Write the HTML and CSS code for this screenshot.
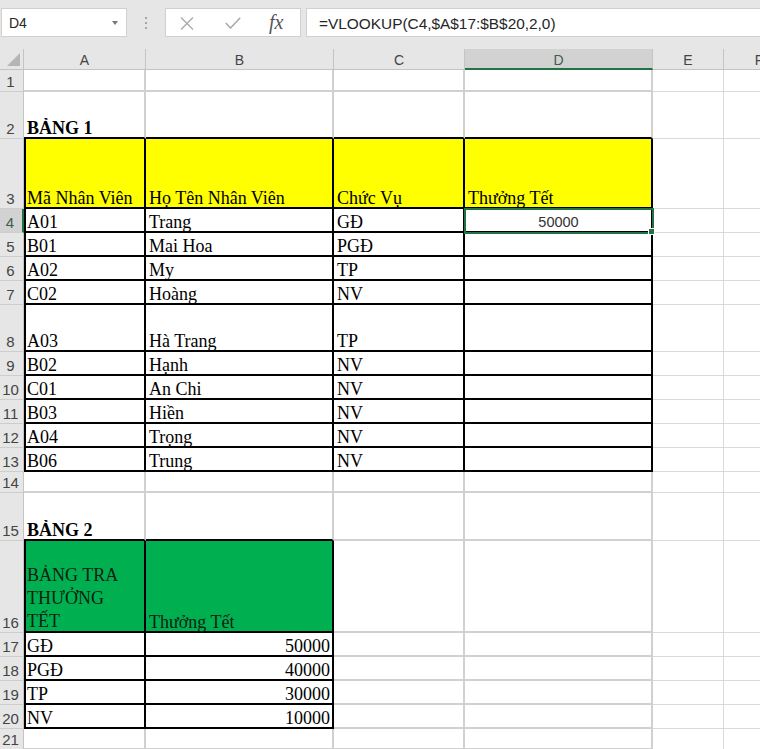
FILE: index.html
```html
<!DOCTYPE html>
<html lang="vi">
<head>
<meta charset="utf-8">
<title>Excel VLOOKUP</title>
<link rel="stylesheet" href="styles.css">
</head>
<body>
<div class="app">
  <div class="toolbar">
    <div class="namebox"><span class="nb-text">D4</span><span class="caret"></span></div>
    <div class="grip"><i></i><i></i><i></i></div>
    <div class="fbtns">
      <svg class="ic-x" width="14" height="13" viewBox="0 0 14 13"><path d="M1 0.5 L13 12.5 M13 0.5 L1 12.5" stroke="#ababab" stroke-width="1.4" fill="none"/></svg>
      <svg class="ic-ok" width="16" height="12" viewBox="0 0 16 12"><path d="M0.8 6 L5.5 11 L15.2 0.8" stroke="#ababab" stroke-width="1.6" fill="none"/></svg>
      <span class="fx">fx</span>
    </div>
    <div class="formula">=VLOOKUP(C4,$A$17:$B$20,2,0)</div>
  </div>

  <div class="sheet">
    <!-- header row -->
    <div class="corner"><span class="tri"></span></div>
    <div class="ch">A</div>
    <div class="ch">B</div>
    <div class="ch">C</div>
    <div class="ch ch-sel">D</div>
    <div class="ch">E</div>
    <div class="ch ch-last">F</div>

    <!-- 1 -->
    <div class="rh">1</div>
    <div class="c"></div><div class="c"></div><div class="c"></div><div class="c"></div><div class="e"></div><div class="e"></div>

    <!-- 2 -->
    <div class="rh">2</div>
    <div class="c tb b">BẢNG 1</div><div class="c tb"></div><div class="c tb"></div><div class="c tb"></div><div class="e"></div><div class="e"></div>

    <!-- 3 -->
    <div class="rh">3</div>
    <div class="c t tl yl">Mã Nhân Viên</div><div class="c t yl">Họ Tên Nhân Viên</div><div class="c t yl">Chức Vụ</div><div class="c t yl">Thưởng Tết</div><div class="e"></div><div class="e"></div>

    <!-- 4 -->
    <div class="rh rh-sel">4</div>
    <div class="c t tl">A01</div><div class="c t">Trang</div><div class="c t">GĐ</div><div class="c t sel"><span class="val">50000</span></div><div class="e"></div><div class="e"></div>

    <!-- 5 -->
    <div class="rh">5</div>
    <div class="c t tl">B01</div><div class="c t">Mai Hoa</div><div class="c t">PGĐ</div><div class="c t"></div><div class="e"></div><div class="e"></div>

    <!-- 6 -->
    <div class="rh">6</div>
    <div class="c t tl">A02</div><div class="c t">My</div><div class="c t">TP</div><div class="c t"></div><div class="e"></div><div class="e"></div>

    <!-- 7 -->
    <div class="rh">7</div>
    <div class="c t tl">C02</div><div class="c t">Hoàng</div><div class="c t">NV</div><div class="c t"></div><div class="e"></div><div class="e"></div>

    <!-- 8 -->
    <div class="rh">8</div>
    <div class="c t tl">A03</div><div class="c t">Hà Trang</div><div class="c t">TP</div><div class="c t"></div><div class="e"></div><div class="e"></div>

    <!-- 9 -->
    <div class="rh">9</div>
    <div class="c t tl">B02</div><div class="c t">Hạnh</div><div class="c t">NV</div><div class="c t"></div><div class="e"></div><div class="e"></div>

    <!-- 10 -->
    <div class="rh">10</div>
    <div class="c t tl">C01</div><div class="c t">An Chi</div><div class="c t">NV</div><div class="c t"></div><div class="e"></div><div class="e"></div>

    <!-- 11 -->
    <div class="rh">11</div>
    <div class="c t tl">B03</div><div class="c t">Hiền</div><div class="c t">NV</div><div class="c t"></div><div class="e"></div><div class="e"></div>

    <!-- 12 -->
    <div class="rh">12</div>
    <div class="c t tl">A04</div><div class="c t">Trọng</div><div class="c t">NV</div><div class="c t"></div><div class="e"></div><div class="e"></div>

    <!-- 13 -->
    <div class="rh">13</div>
    <div class="c t tl">B06</div><div class="c t">Trung</div><div class="c t">NV</div><div class="c t"></div><div class="e"></div><div class="e"></div>

    <!-- 14 -->
    <div class="rh">14</div>
    <div class="c"></div><div class="c"></div><div class="c"></div><div class="c"></div><div class="e"></div><div class="e"></div>

    <!-- 15 -->
    <div class="rh">15</div>
    <div class="c tb b">BẢNG 2</div><div class="c tb"></div><div class="c"></div><div class="c"></div><div class="e"></div><div class="e"></div>

    <!-- 16 -->
    <div class="rh">16</div>
    <div class="c t tl gr wrap"><span class="wrap-in">BẢNG TRA<br>THƯỞNG<br>TẾT</span></div><div class="c t gr">Thưởng Tết</div><div class="c"></div><div class="c"></div><div class="e"></div><div class="e"></div>

    <!-- 17 -->
    <div class="rh">17</div>
    <div class="c t tl">GĐ</div><div class="c t num">50000</div><div class="c"></div><div class="c"></div><div class="e"></div><div class="e"></div>

    <!-- 18 -->
    <div class="rh">18</div>
    <div class="c t tl">PGĐ</div><div class="c t num">40000</div><div class="c"></div><div class="c"></div><div class="e"></div><div class="e"></div>

    <!-- 19 -->
    <div class="rh">19</div>
    <div class="c t tl">TP</div><div class="c t num">30000</div><div class="c"></div><div class="c"></div><div class="e"></div><div class="e"></div>

    <!-- 20 -->
    <div class="rh">20</div>
    <div class="c t tl">NV</div><div class="c t num">10000</div><div class="c"></div><div class="c"></div><div class="e"></div><div class="e"></div>

    <!-- 21 -->
    <div class="rh">21</div>
    <div class="c"></div><div class="c"></div><div class="c"></div><div class="c"></div><div class="e"></div><div class="e"></div>
  </div>
</div>
</body>
</html>
```

FILE: styles.css
```css
html, body {
  margin: 0;
  padding: 0;
  overflow: hidden;
  background: #ffffff;
}

.app {
  width: 760px;
  height: 749px;
  overflow: hidden;
}

/* ---------- formula bar ---------- */
.toolbar {
  height: 49px;
  box-sizing: border-box;
  background: #e6e6e6;
  display: flex;
  align-items: flex-start;
  padding-top: 8px;
  font-family: "Liberation Sans", Arial, sans-serif;
}

.namebox {
  margin-left: 1px;
  width: 126px;
  height: 29px;
  box-sizing: border-box;
  background: #fff;
  border: 1px solid #d0d0d0;
  display: flex;
  align-items: center;
  padding: 0 8px 0 7px;
  color: #262626;
  font-size: 14px;
}

.caret {
  margin-left: auto;
  width: 0;
  height: 0;
  border-left: 3.5px solid transparent;
  border-right: 3.5px solid transparent;
  border-top: 4px solid #777;
}

.grip {
  width: 38px;
  height: 29px;
  display: flex;
  flex-direction: column;
  align-items: center;
  justify-content: center;
  gap: 3px;
}

.grip i {
  display: block;
  width: 2px;
  height: 2px;
  background: #a6a6a6;
}

.fbtns {
  width: 136px;
  height: 29px;
  box-sizing: border-box;
  background: #fff;
  border: 1px solid #d0d0d0;
  display: flex;
  align-items: center;
}

.ic-x { margin-left: 14px; margin-top: 1px; }
.ic-ok { margin-left: 31px; margin-top: 1px; }

.fx {
  margin-left: 28px;
  font-family: "Liberation Serif", "Times New Roman", serif;
  font-style: italic;
  font-size: 20px;
  color: #555;
  line-height: 1;
  margin-top: -1px;
}

.formula {
  margin-left: 5px;
  flex: 1;
  height: 29px;
  box-sizing: border-box;
  background: #fff;
  border: 1px solid #d0d0d0;
  border-right: none;
  padding: 2px 0 0 12px;
  font-size: 15.4px;
  line-height: 25px;
  color: #262626;
  white-space: nowrap;
}

/* ---------- sheet grid ---------- */
.sheet {
  display: grid;
  grid-template-columns: 24px 122px 188px 131px 188px 71px 71px;
  grid-template-rows: 21px 22px 47px 70px 24px 24px 24px 24px 47px 24px 24px 24px 24px 24px 21px 48px 92px 24px 24px 24px 24px 21px;
  width: 795px;
}

.corner {
  background: #e6e6e6;
  border-right: 1px solid #c4c4c4;
  border-bottom: 1px solid #c4c4c4;
  position: relative;
}

.tri {
  position: absolute;
  right: 3px;
  bottom: 3px;
  width: 0;
  height: 0;
  border-left: 13px solid transparent;
  border-bottom: 13px solid #b5b5b5;
}

.ch {
  background: #e6e6e6;
  border-right: 1px solid #c4c4c4;
  border-bottom: 1px solid #c4c4c4;
  font-family: "Liberation Sans", Arial, sans-serif;
  font-size: 14px;
  line-height: 17px;
  padding-top: 3px;
  box-sizing: border-box;
  text-align: center;
  color: #444;
}

.ch-sel {
  background: #d2d2d2;
  border-bottom: 2px solid #217346;
  color: #3d5e4a;
}

.rh {
  background: #e6e6e6;
  border-right: 1px solid #c4c4c4;
  border-bottom: 1px solid #cdcdcd;
  box-sizing: border-box;
  display: flex;
  align-items: flex-end;
  justify-content: center;
  padding: 0 2px 2px 0;
  font-family: "Liberation Sans Narrow", "Liberation Sans", Arial, sans-serif;
  font-size: 15px;
  line-height: 15px;
  color: #444;
}

.rh-sel {
  background: #d2d2d2;
  border-right: 2px solid #217346;
  color: #3d5e4a;
}

.c, .e {
  box-sizing: border-box;
  display: flex;
  align-items: flex-end;
  padding: 0 2px 0 3px;
  font-family: "Liberation Serif", "Times New Roman", serif;
  font-size: 18px;
  line-height: 18px;
  color: #000;
  white-space: nowrap;
}

.c {
  border-right: 2px solid #d0d0d0;
  border-bottom: 2px solid #d0d0d0;
}

.e {
  border-right: 1px solid #d9d9d9;
  border-bottom: 1px solid #d9d9d9;
}

.b { font-weight: bold; }

.tb { border-bottom-color: #000; }

.t {
  border-right-color: #000;
  border-bottom-color: #000;
}

.tl { box-shadow: inset 2px 0 0 #000; }

.yl { background: #ffff00; }
.gr { background: #00b050; color: #0d1f12; }

.wrap {
  white-space: normal;
  line-height: 23px;
}

.wrap-in {
  display: block;
  margin-bottom: -2px;
}

.num {
  justify-content: flex-end;
  padding-right: 2px;
}

.sel {
  position: relative;
  z-index: 2;
  outline: 2px solid #217346;
  outline-offset: -1px;
  justify-content: center;
}

.sel::after {
  content: "";
  position: absolute;
  right: -4px;
  bottom: -4px;
  width: 5px;
  height: 5px;
  background: #217346;
  border: 1px solid #fff;
}

.val {
  font-family: "Liberation Sans", Arial, sans-serif;
  font-size: 14.5px;
  line-height: 16px;
  color: #333;
  padding-bottom: 1px;
}
```
